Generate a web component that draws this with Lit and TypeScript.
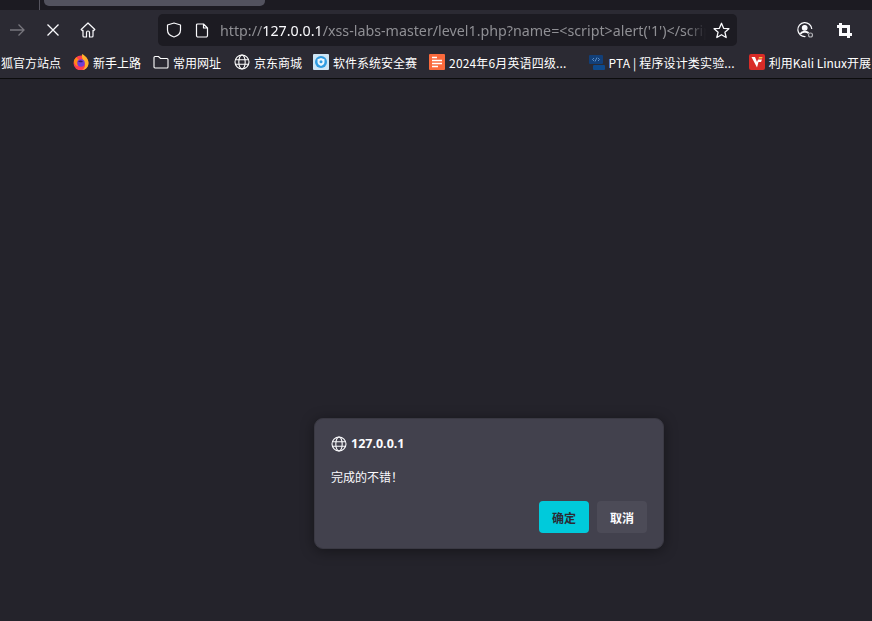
import { LitElement, html, css } from "lit";
import { customElement } from "lit/decorators.js";

const globe = (s: number) => html`<svg width=${s} height=${s} viewBox="0 0 16 16" fill="none" stroke="currentColor" stroke-width="1.1"><circle cx="8" cy="8" r="7"/><ellipse cx="8" cy="8" rx="3.2" ry="7"/><path d="M1.3 5.8h13.4M1.3 10.2h13.4"/></svg>`;

@customElement("app-root")
export class AppRoot extends LitElement {
  static styles = css`
    :host { display: block; width: 872px; height: 621px; overflow: hidden; background: #24232b; font-family: "Noto Sans CJK SC", "Noto Sans", sans-serif; position: relative; }
    .tabs { height: 10px; background: #1c1b22; display: flex; padding-left: 39px; }
    .sep { width: 1px; height: 10px; background: #55545e; }
    .tab { width: 221px; height: 6px; margin-left: 4px; background: #52525e; border-radius: 0 0 5px 5px; }
    .toolbar { height: 36px; background: #2b2a33; display: flex; align-items: flex-start; }
    .ic { display: flex; align-items: center; justify-content: center; width: 18px; height: 18px; color: #fbfbfe; flex: none; }
    .back { margin: 11px 0 0 8px; color: #77767d; }
    .stop { margin: 11px 0 0 18px; }
    .home { margin: 11px 0 0 17px; }
    .url { margin: 4px 0 0 61px; width: 579px; height: 32px; background: #1c1b22; border-radius: 5px; display: flex; align-items: center; flex: none; box-sizing: border-box; padding-left: 7px; }
    .url .doc { margin-left: 10px; }
    .addr { margin-left: 9px; width: 486px; overflow: hidden; white-space: nowrap; font: 14.25px "Noto Sans", sans-serif; color: #8f8f94; flex: none; -webkit-mask-image: linear-gradient(to right, #000 96%, transparent); mask-image: linear-gradient(to right, #000 96%, transparent); }
    .addr b { font-weight: 400; color: #fbfbfe; }
    .star { margin-left: 6px; }
    .acct { margin: 11px 0 0 59px; }
    .crop { margin: 11px 0 0 21px; }
    .bookmarks { height: 32px; background: #2b2a33; border-bottom: 1px solid #0c0c0d; display: flex; align-items: center; overflow: hidden; white-space: nowrap; color: #fff; font-size: 12px; }
    .bm { display: flex; align-items: center; gap: 4px; flex: none; margin-left: 12px; }
    .bm.first { margin-left: 1px; }
    .bm.m11 { margin-left: 11px; }
    .bm.m13 { margin-left: 13px; }
    .bm.m14 { margin-left: 14px; }
    .bm.m22 { margin-left: 22px; }
    .wide { letter-spacing: 0.15px; }
    .bm svg { flex: none; }
    .dialog { position: absolute; left: 314px; top: 418px; width: 350px; height: 131px; box-sizing: border-box; padding: 16px 16px 16px; background: #42414d; border: 1px solid #3a3943; border-radius: 9px; box-shadow: 0 2px 14px rgba(0,0,0,.4); color: #fbfbfe; display: flex; flex-direction: column; }
    .title { display: flex; align-items: center; gap: 4px; font: 700 12.5px "Noto Sans", sans-serif; height: 18px; }
    .msg { font-size: 12px; margin-top: 16px; line-height: 18px; }
    .btns { display: flex; justify-content: flex-end; gap: 8px; margin-top: 15px; }
    .btn { width: 50px; height: 32px; border-radius: 4px; display: flex; align-items: center; justify-content: center; font-size: 12px; font-weight: 700; background: #4c4b57; color: #fbfbfe; }
    .btn.ok { background: #00cadb; color: #2b2a33; }
  `;
  render() {
    return html`
      <div class="tabs"><div class="sep"></div><div class="tab"></div></div>
      <div class="toolbar">
        <span class="ic back"><svg width="15" height="14" viewBox="0 0 15 14" fill="none" stroke="currentColor" stroke-width="1.3"><path d="M0 7h14M8.500 1.500 14 7l-5.500 5.500"/></svg></span>
        <span class="ic stop"><svg width="14" height="14" viewBox="0 0 14 14" fill="none" stroke="currentColor" stroke-width="1.3"><path d="M1.500 1.500l11 11M12.500 1.500l-11 11"/></svg></span>
        <span class="ic home"><svg width="16" height="16" viewBox="0 0 16 16" fill="none" stroke="currentColor" stroke-width="1.2" stroke-linejoin="round"><path d="M8 1 1.200 7.500 2.500 8.700 3 8.300V14a1 1 0 0 0 1 1h2.500v-4.500a1.500 1.500 0 0 1 3 0V15H12a1 1 0 0 0 1-1V8.300l.5.400 1.300-1.200z"/></svg></span>
        <div class="url">
          <span class="ic"><svg width="16" height="16" viewBox="0 0 16 16" fill="none" stroke="currentColor" stroke-width="1.2" stroke-linejoin="round"><path d="M8 1 1.500 3v5c0 3.500 3 6 6.500 7 3.500-1 6.500-3.500 6.500-7V3z"/></svg></span>
          <span class="ic doc"><svg width="14" height="15" viewBox="0 0 14 15" fill="none" stroke="currentColor" stroke-width="1.2" stroke-linejoin="round"><path d="M2.500 1h6L12.500 5v7.500a1.500 1.500 0 0 1-1.500 1.500H3a1.500 1.500 0 0 1-1.500-1.500V2a1 1 0 0 1 1-1zM8.500 1v4h4"/></svg></span>
          <span class="addr">http://<b>127.0.0.1</b>/xss-labs-master/level1.php?name=&lt;script&gt;alert('1')&lt;/script&gt;</span>
          <span class="ic star"><svg width="17" height="17" viewBox="0 0 16 16" fill="none" stroke="currentColor" stroke-width="1.2" stroke-linejoin="round"><path d="M8 1.200l2 4.700 5 .4-3.800 3.300 1.200 5L8 12l-4.400 2.600 1.200-5L1 6.300l5-.4z"/></svg></span>
        </div>
        <span class="ic acct"><svg width="18" height="18" viewBox="0 0 18 18" fill="none" stroke="currentColor" stroke-width="1.200"><path d="M9.500 15.500A7 7 0 1 1 15.800 8"/><circle cx="8.700" cy="6.800" r="2.300" fill="currentColor"/><path d="M4.500 13c1-2.500 6-3 8-1" stroke-width="2"/><circle cx="14.500" cy="14" r="2" stroke="#b0b0b5"/></svg></span>
        <span class="ic crop"><svg width="15" height="15" viewBox="0 0 15 15" fill="none" stroke="currentColor" stroke-width="3"><path d="M0 3.500h11.500V15M3.500 0v11.500H15"/></svg></span>
      </div>
      <div class="bookmarks">
        <span class="bm first">狐官方站点</span>
        <span class="bm"><svg width="16" height="16" viewBox="0 0 16 16"><circle cx="8" cy="9" r="7.500" fill="#ff3d4f"/><path d="M9 0c4 2 6.500 5 6.500 9 0 4-3 7-6.500 7 3.500-2 4-6 1.500-9C9.500 5 8.500 3 9 0z" fill="#ffb129"/><path d="M.8 7c.7-2 2-3.300 3-4 0 1.500 1 2 2 2.500C4 7 4 10 5 12 3 12 1 10 .8 7z" fill="#ff8a16"/><circle cx="8" cy="9" r="3.700" fill="#6f3fd6"/><path d="M5 7.500c2-1.500 4-1 5 .5-1 0-2 .3-3 .3z" fill="#2a1a6e"/></svg>新手上路</span>
        <span class="bm"><svg width="16" height="16" viewBox="0 0 16 16" fill="none" stroke="currentColor" stroke-width="1.100"><path d="M1 3.500a1 1 0 0 1 1-1h3.500l2 2H14a1 1 0 0 1 1 1V13a1 1 0 0 1-1 1H2a1 1 0 0 1-1-1z"/></svg>常用网址</span>
        <span class="bm m13">${globe(16)}京东商城</span>
        <span class="bm m11"><svg width="16" height="16" viewBox="0 0 16 16"><rect width="16" height="16" rx="1" fill="#cfe6f5"/><circle cx="8" cy="8" r="6" fill="#2f9be0"/><path d="M8 4l3.500 1.200V8c0 2-1.500 3.300-3.500 4-2-.7-3.500-2-3.500-4V5.200z" fill="#e8f6ff"/><circle cx="8" cy="7.800" r="1.500" fill="#2f9be0"/></svg>软件系统安全赛</span>
        <span class="bm wide"><svg width="16" height="16" viewBox="0 0 16 16"><rect width="16" height="16" rx="1" fill="#fb6a3c"/><path d="M3 3.500h5M3 6.500h10M3 9.500h10M3 12.500h6" stroke="#fff" stroke-width="1.500"/></svg>2024年6月英语四级...</span>
        <span class="bm m22 wide"><svg width="16" height="16" viewBox="0 0 16 16"><rect y="1" width="14" height="9" rx="1" fill="#123f78"/><path d="M3.500 5.500l1.500-1.500M3.500 5.500l1.500 1.500M10.500 5.500L9 4M10.500 5.500L9 7M6 7.500l2-4" stroke="#6fa0d8" stroke-width=".8"/><rect x="4" y="11" width="12" height="5" rx="1" fill="#0e4a8c"/></svg>PTA | 程序设计类实验...</span>
        <span class="bm m14"><svg width="16" height="16" viewBox="0 0 16 16"><rect width="16" height="16" rx="2" fill="#d92b27"/><path d="M2.500 3H6l2 5 1-2.500h4L12 8H9.500L8 13.500z" fill="#fff"/><path d="M10 3h3.500L13 4.500H9.500z" fill="#f7c948"/></svg>利用Kali Linux开展</span>
      </div>
      <div class="dialog">
        <div class="title">${globe(16)}127.0.0.1</div>
        <div class="msg">完成的不错！</div>
        <div class="btns"><div class="btn ok">确定</div><div class="btn">取消</div></div>
      </div>
    `;
  }
}
